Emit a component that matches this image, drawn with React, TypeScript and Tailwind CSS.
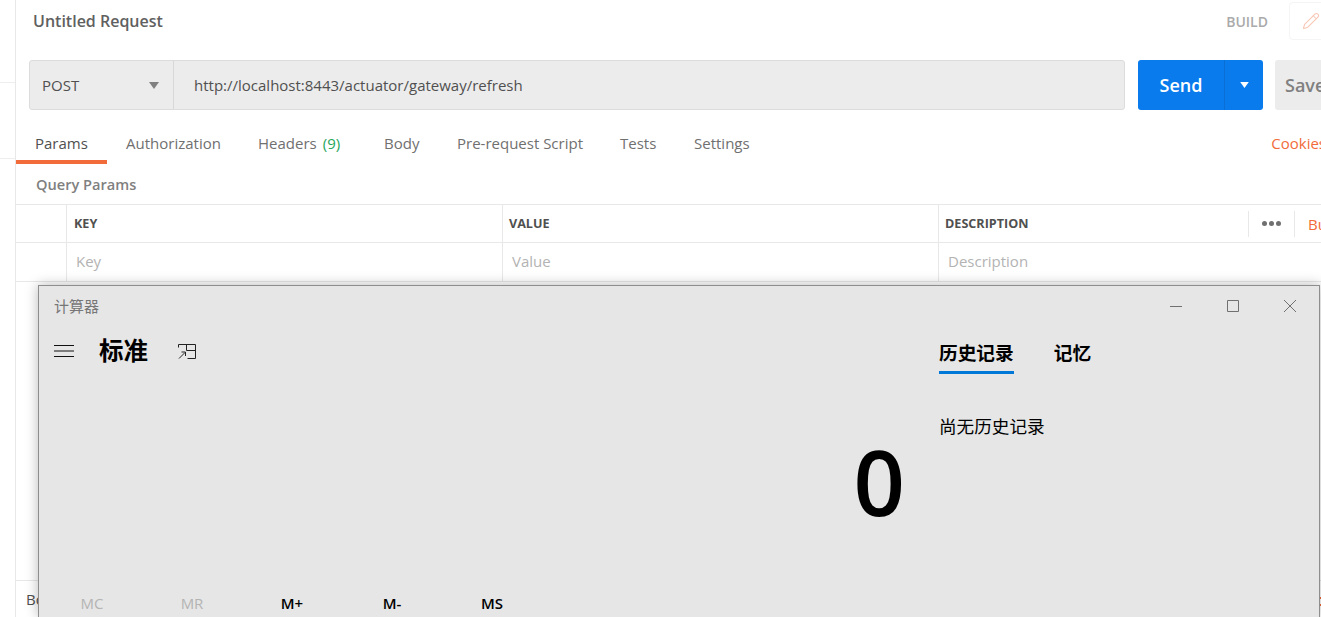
import { Pencil } from "lucide-react";

const tabs = [
  { label: "Authorization", width: "w-[132px]" },
  { label: "Headers", width: "w-[126px]", count: "(9)" },
  { label: "Body", width: "w-[73px]" },
  { label: "Pre-request Script", width: "w-[163px]" },
  { label: "Tests", width: "w-[74px]" },
  { label: "Settings", width: "w-[80px]" },
];

const memory = [
  { label: "MC", off: true },
  { label: "MR", off: true },
  { label: "M+" },
  { label: "M-" },
  { label: "MS" },
];

function Caret({ className }: { className: string }) {
  return (
    <svg viewBox="0 0 10 7" className={className} fill="currentColor">
      <path d="M0 0h10L5 7z" />
    </svg>
  );
}

function RequestBuilder() {
  return (
    <div className="flex h-[617px] w-[1305px] shrink-0 flex-col">
      <div className="flex h-[60px] shrink-0 items-start">
        <div className="mt-[10px] ml-[17px] text-[16px] leading-[22px] font-semibold text-[#606060]">Untitled Request</div>
        <div className="mt-[13px] ml-auto text-[14px] leading-[18px] font-semibold text-[#aaaaaa]">BUILD</div>
        <div className="mt-[2px] mr-[-16px] ml-[21px] flex h-[38px] w-[48px] items-center rounded-[4px] border border-[#f5f5f5] pl-[12px]">
          <Pencil size={18} strokeWidth={1.4} className="text-[#f9c6b4]" />
        </div>
      </div>

      <div className="flex h-[50px] shrink-0">
        <div className="ml-[13px] flex w-[1096px] shrink-0 rounded-[3px] border border-[#dcdcdc] bg-[#ececec] text-[15px] text-[#505050]">
          <div className="flex w-[144px] items-center justify-between border-r border-[#d8d8d8] pr-[14px] pl-[12px] font-medium">
            POST
            <Caret className="h-[7px] w-[10px] text-[#808080]" />
          </div>
          <div className="flex items-center pl-[20px]">http://localhost:8443/actuator/gateway/refresh</div>
        </div>
        <div className="ml-[13px] flex w-[125px] shrink-0 rounded-[3px] bg-[#097bed] text-white">
          <div className="flex w-[86px] items-center justify-center text-[18px] font-semibold">Send</div>
          <div className="flex flex-1 items-center justify-center border-l border-[#0a6fd4]">
            <Caret className="h-[6px] w-[9px]" />
          </div>
        </div>
        <div className="ml-[12px] flex w-[60px] shrink-0 items-center rounded-[3px] bg-[#ececec] pl-[10px] text-[18px] font-semibold whitespace-nowrap text-[#808080]">
          Save
        </div>
      </div>

      <div className="mt-[17px] flex h-[37px] shrink-0 text-[15px] text-[#707070]">
        <div className="w-[91px] border-b-4 border-[#f26b3a] pt-[5px] pl-[19px] text-[#505050]">Params</div>
        <div className="flex pt-[5px] pl-[19px]">
          {tabs.map((tab) => (
            <div key={tab.label} className={`${tab.width} whitespace-nowrap`}>
              {tab.label}
              {tab.count && <span className="ml-[6px] text-[#26a65b]">{tab.count}</span>}
            </div>
          ))}
        </div>
        <div className="mr-[-5px] ml-auto pt-[5px] whitespace-nowrap text-[#f26b3a]">Cookies</div>
      </div>

      <div className="h-[40px] shrink-0 pt-[10px] pl-[20px] text-[14.6px] leading-[20px] font-semibold text-[#808080]">Query Params</div>

      <div className="grid shrink-0 grid-cols-[50px_436px_436px_310px_46px_27px] border-t border-[#e8e8e8] text-[12.6px] font-bold text-[#505050]">
        <div className="h-[38px] border-b border-[#e8e8e8]" />
        <div className="border-b border-l border-[#e8e8e8] pt-[10px] pl-[7px]">KEY</div>
        <div className="border-b border-l border-[#e8e8e8] pt-[10px] pl-[6px]">VALUE</div>
        <div className="border-b border-l border-[#e8e8e8] pt-[10px] pl-[6px]">DESCRIPTION</div>
        <div className="flex items-center border-b border-[#e8e8e8]">
          <div className="flex h-[26px] w-full items-center justify-center gap-[2px] border-l border-[#e8e8e8]">
            <span className="h-[5px] w-[5px] rounded-full bg-[#707070]" />
            <span className="h-[5px] w-[5px] rounded-full bg-[#707070]" />
            <span className="h-[5px] w-[5px] rounded-full bg-[#707070]" />
          </div>
        </div>
        <div className="flex items-center border-b border-[#e8e8e8]">
          <div className="h-[26px] w-full border-l border-[#e8e8e8] pt-[2px] pl-[13px] text-[15px] font-normal whitespace-nowrap text-[#f26b3a]">Bulk Edit</div>
        </div>
      </div>
      <div className="grid h-[39px] shrink-0 grid-cols-[50px_436px_436px_373px] border-b border-[#e8e8e8] text-[15px] text-[#b3b3b3]">
        <div />
        <div className="border-l border-[#e8e8e8] pt-[7px] pl-[9px]">Key</div>
        <div className="border-l border-[#e8e8e8] pt-[7px] pl-[9px]">Value</div>
        <div className="border-l border-[#e8e8e8] pt-[7px] pl-[9px]">Description</div>
      </div>

      <div className="flex-1" />
      <div className="flex h-[37px] shrink-0 items-center border-t border-[#e8e8e8] pl-[10px] text-[15px] text-[#505050]">
        Bootcamp
        <div className="mt-[4px] ml-auto flex w-[1px] flex-col gap-[5px]">
          <span className="h-[2px] bg-[#f26b3a]" />
          <span className="h-[2px] bg-[#f26b3a]" />
        </div>
      </div>
    </div>
  );
}

function Calculator() {
  return (
    <div className="absolute top-[285px] left-[38px] flex h-[332px] w-[1282px] flex-col border-x border-t border-[#8e8e8e] bg-[#e6e6e6] shadow-[0_0_12px_rgba(0,0,0,0.28)]">
      <div className="flex h-[40px] shrink-0 items-center">
        <div className="ml-[15px] text-[15px] leading-[40px] text-[#777777]">计算器</div>
        <div className="ml-auto flex text-[#707070]">
          <svg viewBox="0 0 12 12" className="mr-[45px] h-[12px] w-[12px]" fill="none" stroke="currentColor">
            <path d="M0 6.5h12" />
          </svg>
          <svg viewBox="0 0 12 12" className="mr-[45px] h-[12px] w-[12px]" fill="none" stroke="currentColor">
            <path d="M.5.5h11v11H.5z" />
          </svg>
          <svg viewBox="0 0 12 12" className="mr-[23px] h-[12px] w-[12px]" fill="none" stroke="currentColor">
            <path d="M0 0l12 12M12 0L0 12" />
          </svg>
        </div>
      </div>

      <div className="flex min-h-0 flex-1">
        <div className="flex w-[900px] shrink-0 flex-col">
          <div className="flex h-[50px] shrink-0 items-center">
            <svg viewBox="0 0 20 12" className="ml-[15px] h-[12px] w-[20px]" fill="none" stroke="#111111">
              <path d="M0 .5h20M0 6h20M0 11.5h20" />
            </svg>
            <div className="ml-[25px] text-[24.5px] font-bold text-black">标准</div>
            <svg viewBox="0 0 18 15" className="ml-[30px] h-[15px] w-[18px]" fill="none" stroke="#222222">
              <path d="M.5 3.5V.5h17v14h-8M8.5.5v6h9M1 14.5l6-6M3.5 8H7.5V12" />
            </svg>
          </div>
          <div className="mt-[50px] flex h-[110px] shrink-0 items-center justify-end pr-[34px] text-[90px] leading-none font-semibold text-black">0</div>
          <div className="mt-auto flex pb-[4px] pl-[3px] text-[15px] leading-[20px] font-semibold text-black">
            {memory.map((key) => (
              <div key={key.label} className={key.off ? "w-[100px] text-center font-normal text-[#b4b4b4]" : "w-[100px] text-center"}>
                {key.label}
              </div>
            ))}
          </div>
        </div>

        <div className="flex-1 pt-[10px] text-black">
          <div className="flex text-[18.7px] leading-[26px] font-bold">
            <div className="h-[38px] border-b-[3px] border-[#0078d7] pt-[4px]">历史记录</div>
            <div className="ml-[40px] pt-[4px]">记忆</div>
          </div>
          <div className="mt-[40px] text-[17.6px] leading-[24px]">尚无历史记录</div>
        </div>
      </div>
    </div>
  );
}

export default function App() {
  return (
    <div className="relative flex h-[617px] w-[1321px] overflow-hidden bg-white font-['Open_Sans','Noto_Sans_CJK_SC',sans-serif]">
      <div className="h-full w-[16px] shrink-0 border-r border-[#e8e8e8]">
        <div className="h-[83px] border-b border-[#eeeeee]" />
        <div className="h-[76px] border-b border-[#eeeeee]" />
      </div>
      <RequestBuilder />
      <Calculator />
    </div>
  );
}
